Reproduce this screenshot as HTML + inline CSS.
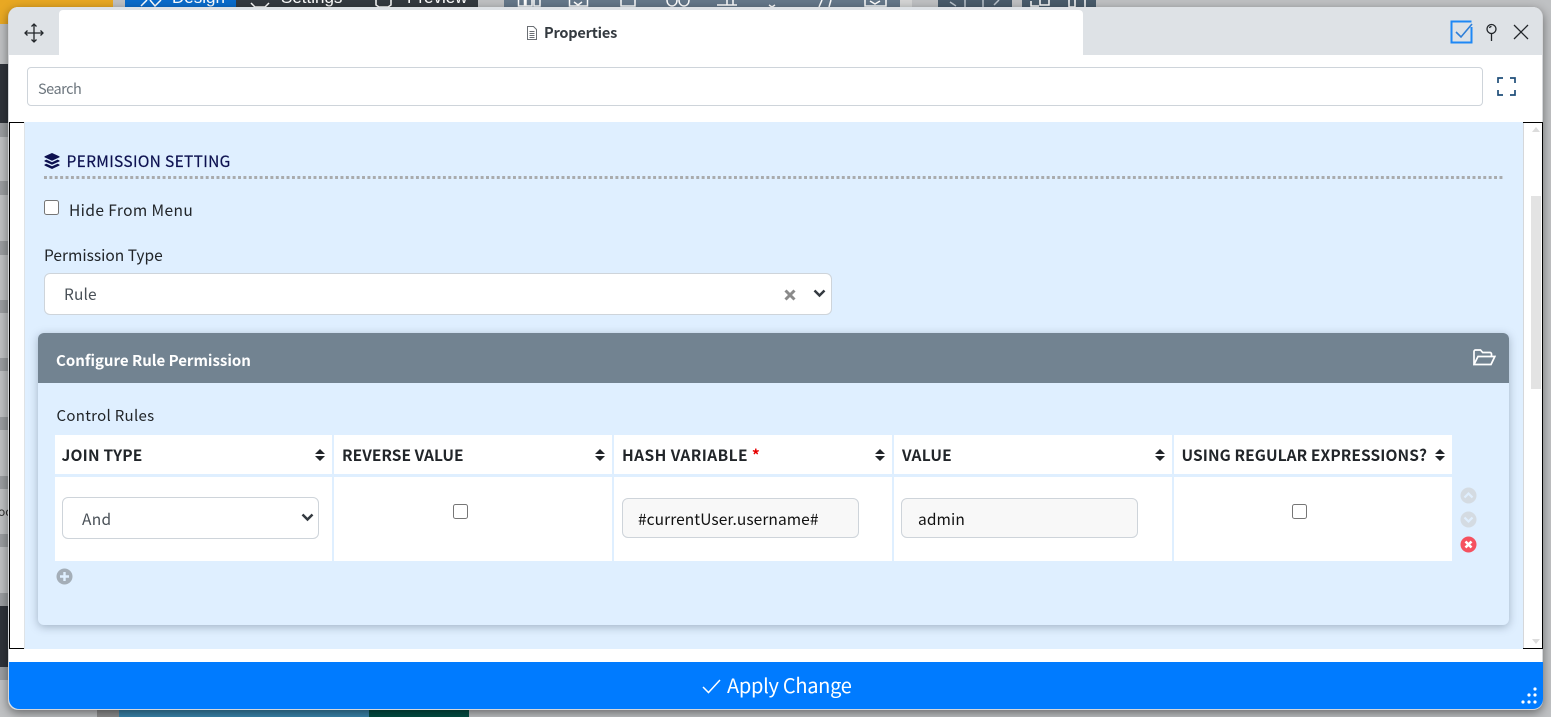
<!DOCTYPE html>
<html><head><meta charset="utf-8"><style>
*{box-sizing:border-box}
html,body{margin:0;padding:0;width:1551px;height:717px;overflow:hidden;background:#bfc1c3}
body{position:relative;font-family:"Noto Sans CJK JP","Liberation Sans",sans-serif;color:#212529}
.a{position:absolute}
.t{position:absolute;white-space:nowrap;line-height:20px}
.th{position:absolute;top:435px;height:39px;background:#fff;font-weight:700;font-size:15.5px;line-height:40px;padding-left:7px;color:#212529;white-space:nowrap}
.td{position:absolute;top:477px;height:84px;background:#fff}
.sort{position:absolute;right:7px;top:14px;width:10px;height:12px}
input[type=checkbox]{position:absolute;margin:0;width:15px;height:15px}
.inp{position:absolute;border:1px solid #ced4da;border-radius:6px;background:#f8f8f8;height:40px;top:498px;width:237px;font-size:15.5px;line-height:40px;padding-left:15px;color:#111}
</style></head><body>
<!-- background strips -->
<div class="a" style="left:0;top:0;width:113px;height:24px;background:#e8a823"></div>
<div class="a" style="left:125px;top:0;width:111px;height:8px;background:#0a6ccc"></div>
<div class="a" style="left:236px;top:0;width:242px;height:8px;background:#343a40"></div>
<div class="a" style="left:504px;top:0;width:396px;height:8px;background:#65788a"></div>
<div class="a" style="left:900px;top:0;width:12px;height:8px;background:#d4d5d5"></div>
<div class="a" style="left:938px;top:0;width:74px;height:8px;background:#495b6b"></div>
<div class="a" style="left:1022px;top:0;width:74px;height:8px;background:#495b6b"></div>
<div class="t" style="left:172px;top:-12px;font-size:17px;color:#fff;font-family:'Liberation Sans',sans-serif">Design</div>
<div class="t" style="left:281px;top:-12px;font-size:17px;color:#fff;font-family:'Liberation Sans',sans-serif">Settings</div>
<div class="t" style="left:407px;top:-12px;font-size:17px;color:#fff;font-family:'Liberation Sans',sans-serif">Preview</div>
<svg class="a" style="left:0;top:0" width="1100" height="8" fill="none" stroke="#fff" stroke-width="1.500">
<path d="M141 6l6-6M150 0l5 6 6-6"/>
<path d="M251 3l4 4h10l4-4"/>
<path d="M376 0v5l3 2h9l3-2V0"/>
<path d="M518.500 0v6h6V0M526 0v6h6V0M534 0v6h6V0"/>
<path d="M569.500 0v6h18V0M574 2l4 3 4-3"/>
<path d="M621 0v6h14V0"/>
<path d="M667 0c0 8 10 8 10 0M679 0c0 8 10 8 10 0"/>
<path d="M717 5h20M727 0v5M733 0v5"/>
<path d="M769 5l3 2 3-2"/>
<path d="M822 0l-3 7M831 0l-2 7"/>
<path d="M865 0v6h21V0M870 1l5 3 5-3"/>
<path d="M950 2l6 4M965 0v7M983 0v7M994 5l5-5" stroke="#b9c3cc"/>
<path d="M1031 1v5h8M1040 0v5h9V0"/>
<path d="M1069 0v7h6V0M1085 0v7"/>
</svg>
<div class="a" style="left:0;top:64px;width:9px;height:59px;background:#2f333a"></div>
<div class="a" style="left:0;top:123px;width:9px;height:14px;background:#9a9da0"></div>
<div class="a" style="left:0;top:181px;width:9px;height:14px;background:#9a9da0"></div>
<div class="a" style="left:0;top:241px;width:9px;height:14px;background:#9a9da0"></div>
<div class="a" style="left:0;top:300px;width:9px;height:13px;background:#9a9da0"></div>
<div class="a" style="left:0;top:358px;width:9px;height:13px;background:#9a9da0"></div>
<div class="a" style="left:0;top:417px;width:9px;height:13px;background:#9a9da0"></div>
<div class="a" style="left:0;top:476px;width:9px;height:13px;background:#9a9da0"></div>
<div class="a" style="left:0;top:534px;width:9px;height:13px;background:#9a9da0"></div>
<div class="a" style="left:0;top:593px;width:9px;height:13px;background:#9a9da0"></div>
<div class="a" style="left:0;top:606px;width:9px;height:61px;background:#2f333a"></div>
<div class="a" style="left:0;top:667px;width:9px;height:13px;background:#9a9da0"></div>
<div class="t" style="left:-2px;top:502px;font-size:12px;color:#333">oo</div>
<div class="a" style="left:97px;top:708px;width:22px;height:9px;background:#8f8f8f"></div>
<div class="a" style="left:119px;top:708px;width:250px;height:9px;background:#3a86ad"></div>
<div class="a" style="left:369px;top:708px;width:100px;height:9px;background:#034f44"></div>

<!-- modal -->
<div class="a" style="left:8px;top:7px;width:1535px;height:703px;background:#fff;border-radius:10px;box-shadow:0 3px 10px rgba(0,0,0,.45);overflow:hidden;border:1px solid #d5d7da;border-top:0">
  <div class="a" style="left:-1px;top:0;width:1536px;height:48px;background:#dee2e6"></div>
  <div class="a" style="left:50px;top:3px;width:1024px;height:45px;background:#fff;border-radius:4px 4px 0 0"></div>
</div>

<!-- move icon -->
<svg class="a" style="left:24px;top:23px" width="20" height="20" viewBox="0 0 20 20" fill="none" stroke="#212529" stroke-width="1.300"><path d="M10 1v18M1 10h18"/><path d="M7.500 3.500L10 1l2.500 2.500M7.500 16.500L10 19l2.500-2.500M3.500 7.500L1 10l2.500 2.500M16.500 7.500L19 10l-2.500 2.500"/></svg>
<!-- doc icon -->
<svg class="a" style="left:526px;top:26px" width="12" height="14" viewBox="0 0 12 14" fill="none" stroke="#6b6f74" stroke-width="1"><path d="M1.500.5h6l3 3v10h-9z"/><path d="M3.500 5.500h5M3.500 7.500h5M3.500 9.500h5M3.500 11.500h5"/></svg>
<div class="t" style="left:544px;top:23px;font-size:14.5px;font-weight:700;color:#343a40;letter-spacing:-.2px">Properties</div>

<!-- top right icons -->
<svg class="a" style="left:1450px;top:20px" width="24" height="24" viewBox="0 0 24 24" fill="none" stroke="#1e88f5"><path d="M21.500 7v15.500H1.500v-21h20" stroke-width="2"/><path d="M6 12l5 5L22 4" stroke="#2f7fd8" stroke-width="1.600"/></svg>
<svg class="a" style="left:1485px;top:23px" width="13" height="19" viewBox="0 0 13 19" fill="none" stroke="#212529" stroke-width="1.300"><circle cx="6.500" cy="6" r="4.500"/><path d="M6.500 10.500V18"/><path d="M4.500 5a2 2 0 0 1 2-1.500"/></svg>
<svg class="a" style="left:1513px;top:24px" width="16" height="16" viewBox="0 0 16 16" fill="none" stroke="#212529" stroke-width="1.300"><path d="M1 1l14 14M15 1L1 15"/></svg>

<!-- search -->
<div class="a" style="left:27px;top:67px;width:1456px;height:39px;border:1px solid #ced4da;border-radius:4px;background:#fff"></div>
<div class="t" style="left:38px;top:79px;font-size:14.5px;color:#6c757d;letter-spacing:-.5px">Search</div>
<svg class="a" style="left:1497px;top:77px" width="19" height="19" viewBox="0 0 19 19" fill="none" stroke="#1f4e79" stroke-width="1.700"><path d="M1 6V1h5M13 1h5v5M18 13v5h-5M6 18H1v-5"/></svg>

<!-- scroll frame -->
<div class="a" style="left:9px;top:122px;width:1534px;height:527px;border:1px solid #000;background:#fff"></div>
<div class="a" style="left:24px;top:122px;width:1499px;height:527px;background:#dfefff"></div>
<div class="a" style="left:1523px;top:123px;width:1px;height:525px;background:#d5d7da"></div>
<div class="a" style="left:24px;top:122px;width:1px;height:527px;background:#dfe3e6"></div>
<div class="a" style="left:1531px;top:196px;width:10px;height:193px;background:#e3e3e3"></div>
<svg class="a" style="left:1532px;top:127px" width="8" height="5"><path d="M0 5L4 0l4 5z" fill="#dcdcdc"/></svg>
<svg class="a" style="left:1532px;top:639px" width="8" height="5"><path d="M0 0l4 5 4-5z" fill="#dcdcdc"/></svg>

<!-- section head -->
<svg class="a" style="left:44px;top:153px" width="16" height="16" viewBox="0 0 16 16" fill="#0d1150"><path d="M8 0l7.500 3.400v.9L8 7.700.5 4.300v-.9z"/><path d="M2.400 6.600L8 9.200l5.600-2.600 1.900.9v.9L8 11.800.5 8.400v-.9z"/><path d="M2.400 10.700L8 13.300l5.600-2.600 1.900.9v.9L8 16 .5 12.500v-.9z"/></svg>
<div class="t" style="left:66.500px;top:151px;font-size:15.500px;color:#0d1150;letter-spacing:.33px;-webkit-text-stroke:.2px #0d1150">PERMISSION SETTING</div>
<div class="a" style="left:44px;top:176px;width:1459px;height:3px;background-image:linear-gradient(90deg,#a9abad 3px,transparent 3px);background-size:5.400px 3px"></div>

<input type="checkbox" style="left:44px;top:200px">
<div class="t" style="left:69px;top:200px;font-size:15.500px;color:#212529;letter-spacing:.4px">Hide From Menu</div>
<div class="t" style="left:44px;top:245px;font-size:15.500px;color:#212529">Permission Type</div>

<div class="a" style="left:44px;top:273px;width:788px;height:42px;background:#fff;border:1px solid #ced4da;border-radius:6px"></div>
<div class="t" style="left:64px;top:284px;font-size:15.500px;color:#495057;letter-spacing:.1px">Rule</div>
<svg class="a" style="left:784px;top:289px" width="12" height="12" viewBox="0 0 12 12" stroke="#8a8a8a" stroke-width="3" fill="none"><path d="M1.500 1.500l9 9M10.500 1.500l-9 9"/></svg>
<svg class="a" style="left:813px;top:289px" width="13" height="9" viewBox="0 0 13 9" stroke="#343a40" stroke-width="2.500" fill="none"><path d="M1.500 1.500L6.500 6.500l5-5"/></svg>

<!-- card -->
<div class="a" style="left:38px;top:333px;width:1471px;height:292px;background:#dfefff;border-radius:6px;box-shadow:0 2px 9px rgba(60,80,100,.38);overflow:hidden">
  <div class="a" style="left:0;top:0;width:1471px;height:50px;background:#728391"></div>
</div>
<div class="t" style="left:56px;top:351px;font-size:15px;font-weight:700;color:#fff">Configure Rule Permission</div>
<svg class="a" style="left:1473px;top:349px" width="23" height="17" viewBox="0 0 23 17" fill="none" stroke="#fff" stroke-width="1.700"><path d="M1 15V2.500A1.500 1.500 0 0 1 2.500 1h5l2.200 2.500h7.300a1.500 1.500 0 0 1 1.500 1.500v2.500"/><path d="M1 15.500L5 7.500h16.800L18 15.500z"/></svg>
<div class="t" style="left:56.500px;top:406px;font-size:15px;color:#212529;letter-spacing:.3px">Control Rules</div>

<!-- table -->
<div class="th" style="left:55px;width:277px;padding-left:6.500px;letter-spacing:.2px">JOIN TYPE<svg class="sort" viewBox="0 0 10 12" fill="#212529"><path d="M5 0l5 5H0zM5 12L0 7h10z"/></svg></div>
<div class="th" style="left:334px;width:278px;padding-left:8px;letter-spacing:.05px">REVERSE VALUE<svg class="sort" viewBox="0 0 10 12" fill="#212529"><path d="M5 0l5 5H0zM5 12L0 7h10z"/></svg></div>
<div class="th" style="left:614px;width:278px;padding-left:8px;letter-spacing:.42px">HASH VARIABLE <span style="color:#e60000">*</span><svg class="sort" viewBox="0 0 10 12" fill="#212529"><path d="M5 0l5 5H0zM5 12L0 7h10z"/></svg></div>
<div class="th" style="left:894px;width:278px;padding-left:8px;letter-spacing:.25px">VALUE<svg class="sort" viewBox="0 0 10 12" fill="#212529"><path d="M5 0l5 5H0zM5 12L0 7h10z"/></svg></div>
<div class="th" style="left:1174px;width:278px;padding-left:7.500px;letter-spacing:.09px">USING REGULAR EXPRESSIONS?<svg class="sort" viewBox="0 0 10 12" fill="#212529"><path d="M5 0l5 5H0zM5 12L0 7h10z"/></svg></div>
<div class="td" style="left:55px;width:277px"></div>
<div class="td" style="left:334px;width:278px"></div>
<div class="td" style="left:614px;width:278px"></div>
<div class="td" style="left:894px;width:278px"></div>
<div class="td" style="left:1174px;width:278px"></div>

<div class="a" style="left:62px;top:497px;width:257px;height:42px;background:#fff;border:1px solid #ced4da;border-radius:6px"></div>
<div class="t" style="left:82px;top:509px;font-size:15.500px;color:#495057;letter-spacing:.3px">And</div>
<svg class="a" style="left:301px;top:513px" width="13" height="9" viewBox="0 0 13 9" stroke="#343a40" stroke-width="2.500" fill="none"><path d="M1.500 1.500L6.500 6.500l5-5"/></svg>
<input type="checkbox" style="left:453px;top:504px">
<div class="inp" style="left:622px;letter-spacing:.07px">#currentUser.username#</div>
<div class="inp" style="left:901px;padding-left:16px;letter-spacing:.1px">admin</div>
<input type="checkbox" style="left:1291.500px;top:504px">

<!-- row actions -->
<svg class="a" style="left:1460px;top:487px" width="17" height="17" viewBox="0 0 17 17"><circle cx="8.500" cy="8.500" r="8" fill="#d4dbe2"/><path d="M4.500 10.500l4-4 4 4" fill="none" stroke="#dfefff" stroke-width="2.200"/></svg>
<svg class="a" style="left:1460px;top:511px" width="17" height="17" viewBox="0 0 17 17"><circle cx="8.500" cy="8.500" r="8" fill="#d4dbe2"/><path d="M4.500 6.500l4 4 4-4" fill="none" stroke="#dfefff" stroke-width="2.200"/></svg>
<svg class="a" style="left:1460px;top:536px" width="17" height="17" viewBox="0 0 17 17"><circle cx="8.500" cy="8.500" r="8" fill="#f5515f"/><path d="M5.500 5.500l6 6M11.500 5.500l-6 6" fill="none" stroke="#fff" stroke-width="2.600"/></svg>
<svg class="a" style="left:56px;top:568px" width="17" height="17" viewBox="0 0 17 17"><circle cx="8.500" cy="8.500" r="8" fill="#a4aeb8"/><path d="M8.500 4v9M4 8.500h9" fill="none" stroke="#dfefff" stroke-width="2.400"/></svg>

<!-- apply -->
<div class="a" style="left:9px;top:662px;width:1534px;height:47px;background:#007bff;border-radius:0 0 10px 10px"></div>
<svg class="a" style="left:702px;top:679px" width="19" height="15" viewBox="0 0 19 15" fill="none" stroke="#fff" stroke-width="1.500"><path d="M1 8l5.500 5.500L18 1"/></svg>
<div class="t" style="left:727px;top:675px;font-size:20px;color:#fff;letter-spacing:-.28px">Apply Change</div>
<svg class="a" style="left:1520px;top:686px" width="18" height="18" fill="#fff"><circle cx="15" cy="3" r="1.600"/><circle cx="9" cy="9" r="1.600"/><circle cx="15" cy="9" r="1.600"/><circle cx="3" cy="16" r="1.600"/><circle cx="9" cy="16" r="1.600"/><circle cx="15" cy="16" r="1.600"/></svg>
</body></html>
